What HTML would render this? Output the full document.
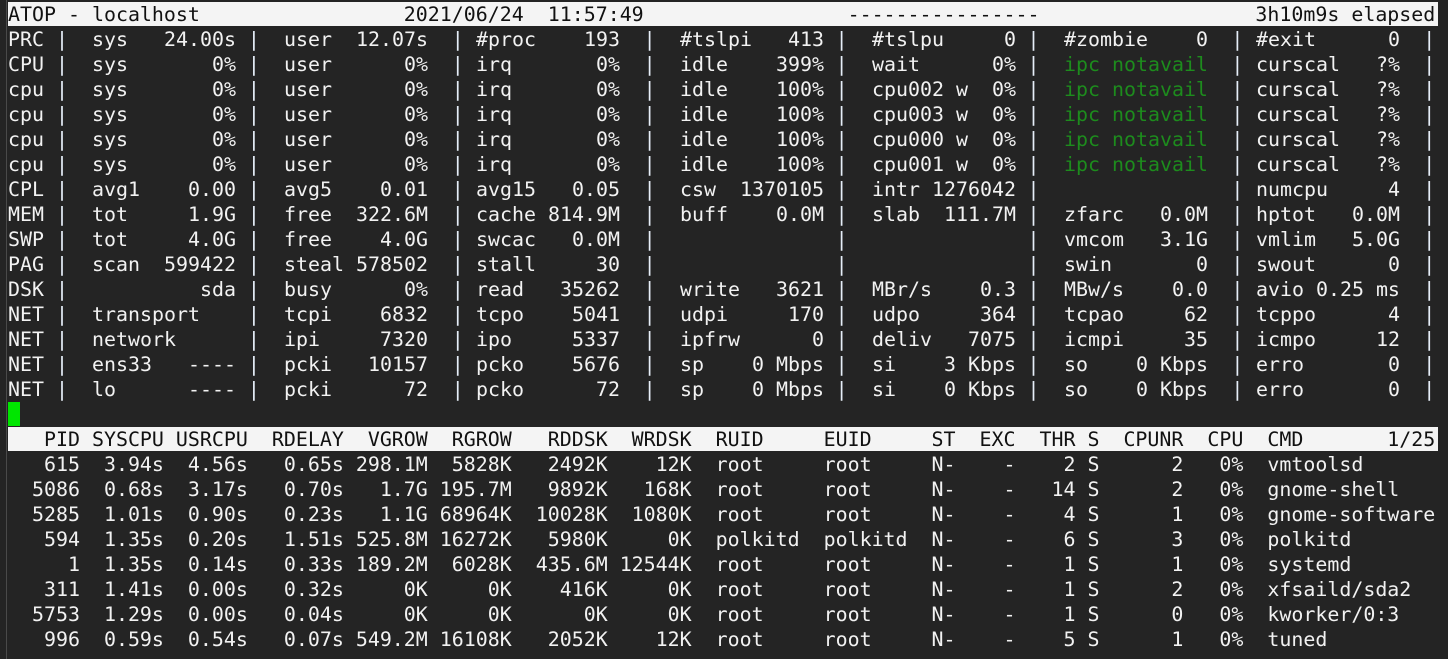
<!DOCTYPE html>
<html><head><meta charset="utf-8"><style>
html,body{margin:0;padding:0;background:#242424;}
body{width:1448px;height:659px;overflow:hidden;position:relative;font-family:"DejaVu Sans Mono","Liberation Mono",monospace;font-size:19.93px;color:#f2f2f2;}
pre{margin:0;font:inherit;line-height:25px;position:absolute;white-space:pre;}
.hb{position:absolute;left:8px;width:1430px;height:24px;background:#f4f4f4;}
.row{position:absolute;left:0;height:25px;width:1448px;line-height:25px;}
.row span{position:absolute;width:144px;display:flex;justify-content:space-between;white-space:pre;}
.row b{font-weight:normal}
.a{left:92px}.b{left:284px}.c{left:476px}.d{left:680px}.e{left:872px}.f{left:1064px}.g{left:1256px}
.gr{color:#1d8c1d}
.edge{position:absolute;left:6px;top:0;width:1px;height:659px;background:#4a4a4a;}
</style></head><body>
<div class="edge"></div>
<div class="hb" style="top:2px"></div>
<pre style="left:8px;top:2px;color:#111">ATOP - localhost                 2021/06/24  11:57:49                 ----------------                  3h10m9s elapsed</pre>
<pre style="left:8px;top:27px;">PRC
CPU
cpu
cpu
cpu
cpu
CPL
MEM
SWP
PAG
DSK
NET
NET
NET
NET</pre>
<pre style="left:8px;top:27px;color:#e6eef8">    |               |                |               |               |               |                |               |
    |               |                |               |               |               |                |               |
    |               |                |               |               |               |                |               |
    |               |                |               |               |               |                |               |
    |               |                |               |               |               |                |               |
    |               |                |               |               |               |                |               |
    |               |                |               |               |               |                |               |
    |               |                |               |               |               |                |               |
    |               |                |               |               |               |                |               |
    |               |                |               |               |               |                |               |
    |               |                |               |               |               |                |               |
    |               |                |               |               |               |                |               |
    |               |                |               |               |               |                |               |
    |               |                |               |               |               |                |               |
    |               |                |               |               |               |                |               |</pre>

<div class="row" style="top:27px"><span class="a">sys<b>24.00s</b></span><span class="b">user<b>12.07s</b></span><span class="c">#proc<b>193</b></span><span class="d">#tslpi<b>413</b></span><span class="e">#tslpu<b>0</b></span><span class="f">#zombie<b>0</b></span><span class="g">#exit<b>0</b></span></div>

<div class="row" style="top:52px"><span class="a">sys<b>0%</b></span><span class="b">user<b>0%</b></span><span class="c">irq<b>0%</b></span><span class="d">idle<b>399%</b></span><span class="e">wait<b>0%</b></span><span class="f gr">ipc notavail</span><span class="g">curscal<b>?%</b></span></div>

<div class="row" style="top:77px"><span class="a">sys<b>0%</b></span><span class="b">user<b>0%</b></span><span class="c">irq<b>0%</b></span><span class="d">idle<b>100%</b></span><span class="e">cpu002 w<b>0%</b></span><span class="f gr">ipc notavail</span><span class="g">curscal<b>?%</b></span></div>

<div class="row" style="top:102px"><span class="a">sys<b>0%</b></span><span class="b">user<b>0%</b></span><span class="c">irq<b>0%</b></span><span class="d">idle<b>100%</b></span><span class="e">cpu003 w<b>0%</b></span><span class="f gr">ipc notavail</span><span class="g">curscal<b>?%</b></span></div>

<div class="row" style="top:127px"><span class="a">sys<b>0%</b></span><span class="b">user<b>0%</b></span><span class="c">irq<b>0%</b></span><span class="d">idle<b>100%</b></span><span class="e">cpu000 w<b>0%</b></span><span class="f gr">ipc notavail</span><span class="g">curscal<b>?%</b></span></div>

<div class="row" style="top:152px"><span class="a">sys<b>0%</b></span><span class="b">user<b>0%</b></span><span class="c">irq<b>0%</b></span><span class="d">idle<b>100%</b></span><span class="e">cpu001 w<b>0%</b></span><span class="f gr">ipc notavail</span><span class="g">curscal<b>?%</b></span></div>

<div class="row" style="top:177px"><span class="a">avg1<b>0.00</b></span><span class="b">avg5<b>0.01</b></span><span class="c">avg15<b>0.05</b></span><span class="d">csw<b>1370105</b></span><span class="e">intr<b>1276042</b></span><span class="g">numcpu<b>4</b></span></div>

<div class="row" style="top:202px"><span class="a">tot<b>1.9G</b></span><span class="b">free<b>322.6M</b></span><span class="c">cache<b>814.9M</b></span><span class="d">buff<b>0.0M</b></span><span class="e">slab<b>111.7M</b></span><span class="f">zfarc<b>0.0M</b></span><span class="g">hptot<b>0.0M</b></span></div>

<div class="row" style="top:227px"><span class="a">tot<b>4.0G</b></span><span class="b">free<b>4.0G</b></span><span class="c">swcac<b>0.0M</b></span><span class="f">vmcom<b>3.1G</b></span><span class="g">vmlim<b>5.0G</b></span></div>

<div class="row" style="top:252px"><span class="a">scan<b>599422</b></span><span class="b">steal<b>578502</b></span><span class="c">stall<b>30</b></span><span class="f">swin<b>0</b></span><span class="g">swout<b>0</b></span></div>

<div class="row" style="top:277px"><span class="a"><b></b><b>sda</b></span><span class="b">busy<b>0%</b></span><span class="c">read<b>35262</b></span><span class="d">write<b>3621</b></span><span class="e">MBr/s<b>0.3</b></span><span class="f">MBw/s<b>0.0</b></span><span class="g">avio 0.25 ms</span></div>

<div class="row" style="top:302px"><span class="a">transport</span><span class="b">tcpi<b>6832</b></span><span class="c">tcpo<b>5041</b></span><span class="d">udpi<b>170</b></span><span class="e">udpo<b>364</b></span><span class="f">tcpao<b>62</b></span><span class="g">tcppo<b>4</b></span></div>

<div class="row" style="top:327px"><span class="a">network</span><span class="b">ipi<b>7320</b></span><span class="c">ipo<b>5337</b></span><span class="d">ipfrw<b>0</b></span><span class="e">deliv<b>7075</b></span><span class="f">icmpi<b>35</b></span><span class="g">icmpo<b>12</b></span></div>

<div class="row" style="top:352px"><span class="a">ens33<b>----</b></span><span class="b">pcki<b>10157</b></span><span class="c">pcko<b>5676</b></span><span class="d">sp<b>0 Mbps</b></span><span class="e">si<b>3 Kbps</b></span><span class="f">so<b>0 Kbps</b></span><span class="g">erro<b>0</b></span></div>

<div class="row" style="top:377px"><span class="a">lo<b>----</b></span><span class="b">pcki<b>72</b></span><span class="c">pcko<b>72</b></span><span class="d">sp<b>0 Mbps</b></span><span class="e">si<b>0 Kbps</b></span><span class="f">so<b>0 Kbps</b></span><span class="g">erro<b>0</b></span></div>

<div style="position:absolute;left:8px;top:402px;width:12px;height:24px;background:#00e600"></div>

<div class="hb" style="top:427px"></div>
<pre style="left:8px;top:427px;color:#111">   PID SYSCPU USRCPU  RDELAY  VGROW  RGROW   RDDSK  WRDSK  RUID     EUID     ST  EXC  THR S  CPUNR  CPU  CMD       1/25</pre>
<pre style="left:8px;top:452px;">   615  3.94s  4.56s   0.65s 298.1M  5828K   2492K    12K  root     root     N-    -    2 S      2   0%  vmtoolsd
  5086  0.68s  3.17s   0.70s   1.7G 195.7M   9892K   168K  root     root     N-    -   14 S      2   0%  gnome-shell
  5285  1.01s  0.90s   0.23s   1.1G 68964K  10028K  1080K  root     root     N-    -    4 S      1   0%  gnome-software
   594  1.35s  0.20s   1.51s 525.8M 16272K   5980K     0K  polkitd  polkitd  N-    -    6 S      3   0%  polkitd
     1  1.35s  0.14s   0.33s 189.2M  6028K  435.6M 12544K  root     root     N-    -    1 S      1   0%  systemd
   311  1.41s  0.00s   0.32s     0K     0K    416K     0K  root     root     N-    -    1 S      2   0%  xfsaild/sda2
  5753  1.29s  0.00s   0.04s     0K     0K      0K     0K  root     root     N-    -    1 S      0   0%  kworker/0:3
   996  0.59s  0.54s   0.07s 549.2M 16108K   2052K    12K  root     root     N-    -    5 S      1   0%  tuned</pre>
</body></html>
